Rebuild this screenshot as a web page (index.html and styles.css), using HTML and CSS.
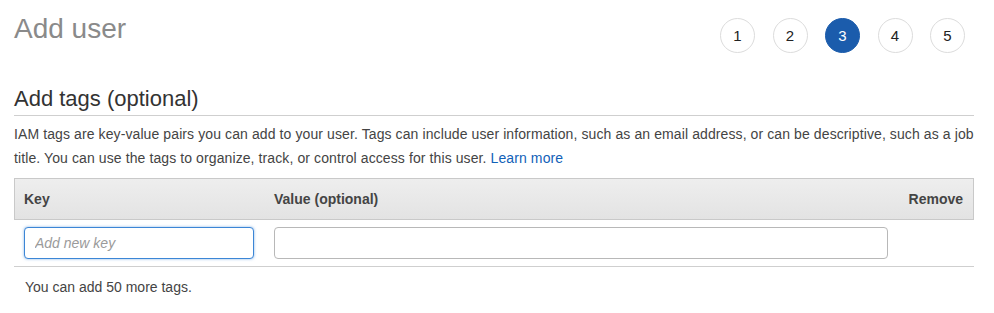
FILE: index.html
```html
<!DOCTYPE html>
<html lang="en">
<head>
  <meta charset="UTF-8" />
  <meta name="viewport" content="width=device-width, initial-scale=1.0" />
  <title>Add user</title>
  <link rel="stylesheet" href="styles.css">
</head>
<body>

  <div class="page">
    <div class="top">
      <h1 class="title">Add user</h1>
      <ol class="steps">
        <li class="step">1</li>
        <li class="step">2</li>
        <li class="step current">3</li>
        <li class="step">4</li>
        <li class="step">5</li>
      </ol>
    </div>

    <h2 class="section-title">Add tags (optional)</h2>

    <p class="intro">
      IAM tags are key-value pairs you can add to your user. Tags can include user information, such as an email address, or can be descriptive, such as a job title. You can use the tags to organize, track, or control access for this user. <a href="#" class="link">Learn more</a>
    </p>

    <div class="tags">
      <div class="tags-head">
        <div class="col">Key</div>
        <div class="col">Value (optional)</div>
        <div class="col remove">Remove</div>
      </div>
      <div class="tags-row">
        <input type="text" class="field focused" placeholder="Add new key" />
        <input type="text" class="field" />
        <div></div>
      </div>
    </div>

    <p class="note">You can add 50 more tags.</p>
  </div>

</body>
</html>
```

FILE: styles.css
```css
* {
  margin: 0;
  padding: 0;
  box-sizing: border-box;
}

html, body {
  background-color: #fff;
  font-family: 'Liberation Sans', Arial, sans-serif;
  color: #444;
}

.page {
  padding: 0 20px 0 14px;
}

.top {
  display: flex;
  justify-content: space-between;
  align-items: flex-start;
  height: 53px;
}

.title {
  padding-top: 12px;
  font-size: 28px;
  line-height: 34px;
  font-weight: normal;
  color: #8a8a8a;
}

.steps {
  list-style: none;
  display: flex;
  gap: 17.5px;
  margin-top: 18px;
  margin-right: 9px;
}

.step {
  width: 35px;
  height: 35px;
  border: 1px solid #dcdcdc;
  border-radius: 50%;
  display: flex;
  align-items: center;
  justify-content: center;
  font-size: 15px;
  color: #222;
}

.step.current {
  background-color: #1b5cac;
  border-color: #1b5cac;
  color: #fff;
}

.section-title {
  margin-top: 33px;
  font-size: 22px;
  line-height: 26px;
  font-weight: normal;
  color: #333;
  padding-bottom: 3px;
  border-bottom: 1px solid #cfcfcf;
}

.intro {
  margin-top: 6px;
  font-size: 14px;
  line-height: 24px;
  letter-spacing: 0.1px;
}

.link {
  color: #1261b8;
  text-decoration: none;
}

.tags {
  margin-top: 8px;
}

.tags-head,
.tags-row {
  display: grid;
  grid-template-columns: 230px 614px 1fr;
  column-gap: 20px;
}

.tags-head {
  height: 42px;
  align-items: center;
  padding: 0 10px 0 9px;
  border: 1px solid #c9c9c9;
  background: linear-gradient(#eeeeee, #e3e3e3);
  font-size: 14px;
  font-weight: bold;
  color: #444;
}

.remove {
  text-align: right;
}

.tags-row {
  padding: 7px 10px 7px 10px;
  border-bottom: 1px solid #cfcfcf;
}

.field {
  height: 32px;
  border: 1px solid #b8b8b8;
  border-radius: 4px;
  padding: 0 10px;
  font-family: 'Liberation Sans', Arial, sans-serif;
  font-size: 14px;
  color: #333;
  outline: none;
}

.field::placeholder {
  color: #9a9a9a;
  font-style: italic;
}

.field.focused {
  border-color: #3c86d6;
  box-shadow: 0 0 3px rgba(60, 134, 214, 0.6);
}

.note {
  margin-top: 10px;
  padding-left: 11px;
  font-size: 14px;
  line-height: 20px;
}
```
